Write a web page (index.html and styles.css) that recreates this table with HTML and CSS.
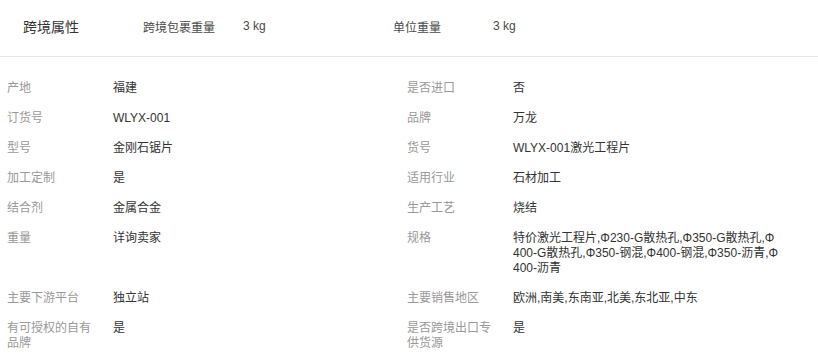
FILE: index.html
```html
<!DOCTYPE html>
<html lang="zh-CN">
<head>
<meta charset="utf-8">
<title>跨境属性</title>
<link rel="stylesheet" href="styles.css">
</head>
<body>
<div class="panel">
  <div class="panel-head">
    <div class="head-title">跨境属性</div>
    <div class="head-label">跨境包裹重量</div>
    <div class="head-value">3 kg</div>
    <div class="head-label">单位重量</div>
    <div class="head-value">3 kg</div>
  </div>
  <div class="attr-grid">
    <div class="attr"><div class="attr-name">产地</div><div class="attr-val">福建</div></div>
    <div class="attr"><div class="attr-name">是否进口</div><div class="attr-val">否</div></div>
    <div class="attr"><div class="attr-name">订货号</div><div class="attr-val">WLYX-001</div></div>
    <div class="attr"><div class="attr-name">品牌</div><div class="attr-val">万龙</div></div>
    <div class="attr"><div class="attr-name">型号</div><div class="attr-val">金刚石锯片</div></div>
    <div class="attr"><div class="attr-name">货号</div><div class="attr-val">WLYX-001激光工程片</div></div>
    <div class="attr"><div class="attr-name">加工定制</div><div class="attr-val">是</div></div>
    <div class="attr"><div class="attr-name">适用行业</div><div class="attr-val">石材加工</div></div>
    <div class="attr"><div class="attr-name">结合剂</div><div class="attr-val">金属合金</div></div>
    <div class="attr"><div class="attr-name">生产工艺</div><div class="attr-val">烧结</div></div>
    <div class="attr"><div class="attr-name">重量</div><div class="attr-val">详询卖家</div></div>
    <div class="attr"><div class="attr-name">规格</div><div class="attr-val">特价激光工程片,Φ230-G散热孔,Φ350-G散热孔,Φ400-G散热孔,Φ350-钢混,Φ400-钢混,Φ350-沥青,Φ400-沥青</div></div>
    <div class="attr"><div class="attr-name">主要下游平台</div><div class="attr-val">独立站</div></div>
    <div class="attr"><div class="attr-name">主要销售地区</div><div class="attr-val">欧洲,南美,东南亚,北美,东北亚,中东</div></div>
    <div class="attr"><div class="attr-name">有可授权的自有品牌</div><div class="attr-val">是</div></div>
    <div class="attr"><div class="attr-name">是否跨境出口专供货源</div><div class="attr-val">是</div></div>
  </div>
</div>
</body>
</html>
```
FILE: styles.css
```css
html, body {
  margin: 0;
  padding: 0;
  background: #fff;
}

body {
  font-family: "Liberation Sans", "Noto Sans CJK SC", sans-serif;
  font-size: 12px;
  color: #333;
}

.panel {
  width: 818px;
}

.panel-head {
  display: flex;
  align-items: center;
  height: 57px;
  padding-left: 23px;
  border-bottom: 1px solid #e8e8e8;
  box-sizing: border-box;
  padding-bottom: 4px;
}

.head-title {
  width: 120px;
  font-size: 14px;
  color: #333;
}

.head-label {
  width: 100px;
  color: #4a4a4a;
}

.head-value {
  width: 150px;
  color: #4a4a4a;
}

.attr-grid {
  display: grid;
  grid-template-columns: 400px 400px;
  row-gap: 15px;
  padding: 24px 0 0 7px;
  line-height: 15px;
}

.attr {
  display: flex;
}

.attr-name {
  width: 90px;
  margin-right: 16px;
  color: #999;
  flex: none;
}

.attr-val {
  width: 267px;
  color: #333;
  word-break: break-all;
}
```
